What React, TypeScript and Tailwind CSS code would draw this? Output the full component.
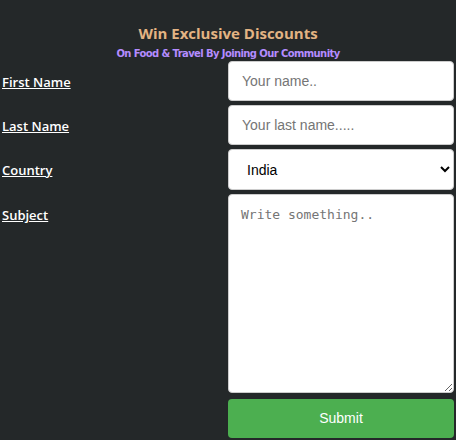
export default function App() {
  const label = "block w-1/2 shrink-0 text-white underline text-[13px] font-semibold font-['Open_Sans',sans-serif] pt-[12px]";
  const field =
    "w-1/2 shrink-0 rounded-[4px] border border-[#ccc] bg-white px-[13px] text-[14px] text-black font-['Liberation_Sans',Arial,sans-serif] placeholder:text-[#757575] outline-none";

  return (
    <div className="min-h-[440px] w-[456px] bg-[#242829] pl-[2px] pr-[2px] pt-[23px]">
      <div className="text-center">
        <h2 className="text-[15px] font-bold leading-[20px] text-[#e3b483] font-['Open_Sans',sans-serif]">
          Win Exclusive Discounts
        </h2>
        <p className="mt-[4px] text-[10px] font-bold leading-[14px] text-[#b48cff] font-['DejaVu_Sans',sans-serif] tracking-[-0.6px]">
          On Food &amp; Travel By Joining Our Community
        </p>
      </div>

      <form className="flex flex-col gap-[4px]">
        <div className="flex">
          <label className={label}>First Name</label>
          <input className={`${field} h-[40px]`} placeholder="Your name.." />
        </div>
        <div className="flex">
          <label className={label}>Last Name</label>
          <input className={`${field} h-[40px]`} placeholder="Your last name....." />
        </div>
        <div className="flex">
          <label className={label}>Country</label>
          <select className={`${field} h-[41px] pl-[14px] pr-[4px]`} defaultValue="india">
            <option value="india">India</option>
            <option value="usa">USA</option>
            <option value="uk">UK</option>
          </select>
        </div>
        <div className="flex">
          <label className={label}>Subject</label>
          <textarea
            className="h-[199px] w-1/2 shrink-0 rounded-[4px] border border-[#ccc] bg-white px-[12px] py-[10px] text-[13px] font-['DejaVu_Sans_Mono',monospace] placeholder:text-[#757575] outline-none"
            placeholder="Write something.."
          />
        </div>
        <div className="flex mt-[2px]">
          <div className="w-1/2 shrink-0" />
          <button
            type="button"
            className="h-[39px] w-1/2 shrink-0 rounded-[4px] bg-[#4caf50] text-[14px] text-white font-['Liberation_Sans',Arial,sans-serif]"
          >
            Submit
          </button>
        </div>
      </form>
    </div>
  );
}
